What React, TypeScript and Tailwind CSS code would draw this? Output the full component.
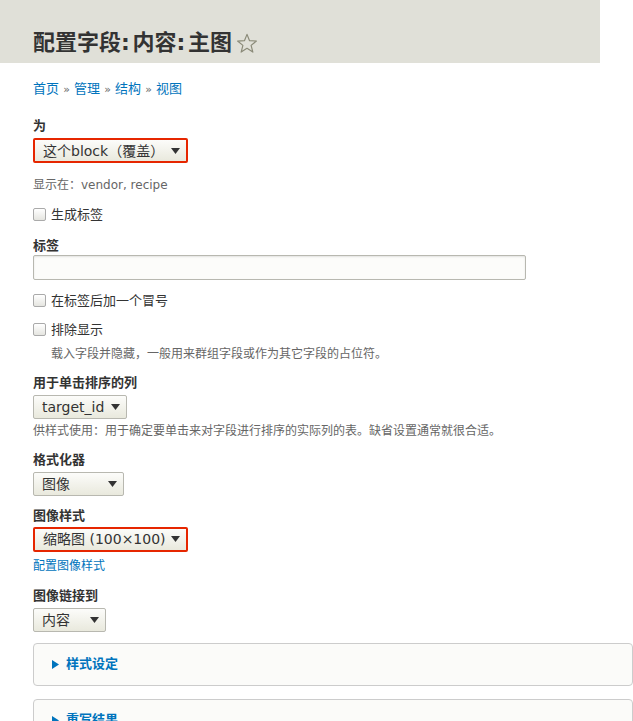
import React from "react";

const font = { fontFamily: '"DejaVu Sans", "Noto Sans CJK SC", sans-serif' };

function Caret() {
  return (
    <svg width="9" height="6" viewBox="0 0 9 6" className="shrink-0">
      <path d="M0 0 L9 0 L4.5 6 Z" fill="#333" />
    </svg>
  );
}

function Select({ text, w, error }: { text: string; w: string; error?: boolean }) {
  return (
    <div
      className={`${w} flex items-center justify-between pl-[8px] pr-[6px] rounded-[2px] text-[14px] text-[#333] bg-gradient-to-b from-[#fcfcfa] to-[#e9e9dd] ${
        error ? "h-[25px] border-2 border-[#e62600]" : "h-[24px] border border-[#b8b8b0]"
      }`}
    >
      <span className="whitespace-nowrap leading-none">{text}</span>
      <Caret />
    </div>
  );
}

function Checkbox({ label }: { label: string }) {
  return (
    <div className="flex items-center gap-[5px] text-[13px] text-[#333]">
      <span className="w-[13px] h-[13px] rounded-[2px] border border-[#aaa] bg-gradient-to-b from-[#fff] to-[#e5e5e0]" />
      <span>{label}</span>
    </div>
  );
}

function Label({ children }: { children: React.ReactNode }) {
  return <div className="text-[13px] font-bold text-[#333] leading-[18px]">{children}</div>;
}

function Details({ title, className }: { title: string; className: string }) {
  return (
    <div
      className={`${className} w-[600px] h-[43px] border border-[#ccc] rounded-[4px] bg-[#fbfbf9] flex items-center pl-[18px]`}
    >
      <span className="text-[13px] font-bold text-[#0074bd] flex items-center gap-[7px]">
        <svg width="7" height="9" viewBox="0 0 7 9">
          <path d="M0 0 L7 4.5 L0 9 Z" fill="#0074bd" />
        </svg>
        {title}
      </span>
    </div>
  );
}

export default function App() {
  return (
    <div className="w-[633px] h-[721px] overflow-hidden bg-white" style={font}>
      <div className="w-[600px] h-[63px] bg-[#e0e0d8] flex items-end pl-[33px] pb-[5px]">
        <h1 className="text-[22px] font-bold text-[#333] leading-[30px] flex items-center gap-[4px]">
          <span className="[word-spacing:-5px]">配置字段: 内容: 主图</span>
          <svg width="22" height="21" viewBox="0 0 24 23" className="mt-[1px]">
            <path
              d="M12 1.5 L14.8 8.4 L22.3 8.8 L16.5 13.6 L18.4 20.9 L12 16.8 L5.6 20.9 L7.5 13.6 L1.7 8.8 L9.2 8.4 Z"
              fill="none"
              stroke="#8a8a78"
              strokeWidth="1.3"
              strokeLinejoin="round"
            />
          </svg>
        </h1>
      </div>

      <div className="pl-[33px] pt-[17px]">
        <div className="text-[13px] text-[#0074bd] leading-[18px]">
          首页 <span className="text-[#666] text-[11px]">»</span> 管理{" "}
          <span className="text-[#666] text-[11px]">»</span> 结构{" "}
          <span className="text-[#666] text-[11px]">»</span> 视图
        </div>

        <div className="mt-[18px]">
          <Label>为</Label>
          <div className="mt-[3px]">
            <Select text="这个block（覆盖）" w="w-[155px]" error />
          </div>
          <div className="mt-[13px] text-[12px] text-[#666] leading-[18px]">显示在：vendor, recipe</div>
        </div>

        <div className="mt-[11px]">
          <Checkbox label="生成标签" />
        </div>

        <div className="mt-[12px]">
          <Label>标签</Label>
          <div className="mt-[0px] w-[493px] h-[25px] border border-[#b8b8b0] rounded-[2px] bg-[#fcfcfa] shadow-[inset_0_1px_2px_rgba(0,0,0,0.1)]" />
        </div>

        <div className="mt-[11px]">
          <Checkbox label="在标签后加一个冒号" />
        </div>
        <div className="mt-[10px]">
          <Checkbox label="排除显示" />
          <div className="pl-[18px] mt-[5px] text-[12px] text-[#666] leading-[18px]">
            载入字段并隐藏，一般用来群组字段或作为其它字段的占位符。
          </div>
        </div>

        <div className="mt-[11px]">
          <Label>用于单击排序的列</Label>
          <div className="mt-[3px]">
            <Select text="target_id" w="w-[94px]" />
          </div>
          <div className="mt-[3px] text-[12px] text-[#666] leading-[18px]">
            供样式使用：用于确定要单击来对字段进行排序的实际列的表。缺省设置通常就很合适。
          </div>
        </div>

        <div className="mt-[11px]">
          <Label>格式化器</Label>
          <div className="mt-[3px]">
            <Select text="图像" w="w-[91px]" />
          </div>
        </div>

        <div className="mt-[11px]">
          <Label>图像样式</Label>
          <div className="mt-[2px]">
            <Select text="缩略图 (100×100)" w="w-[155px]" error />
          </div>
          <div className="mt-[5px] text-[12px] text-[#0074bd] leading-[18px]">配置图像样式</div>
        </div>

        <div className="mt-[12px]">
          <Label>图像链接到</Label>
          <div className="mt-[3px]">
            <Select text="内容" w="w-[73px]" />
          </div>
        </div>

        <Details title="样式设定" className="mt-[11px]" />
        <Details title="重写结果" className="mt-[13px]" />
      </div>
    </div>
  );
}
